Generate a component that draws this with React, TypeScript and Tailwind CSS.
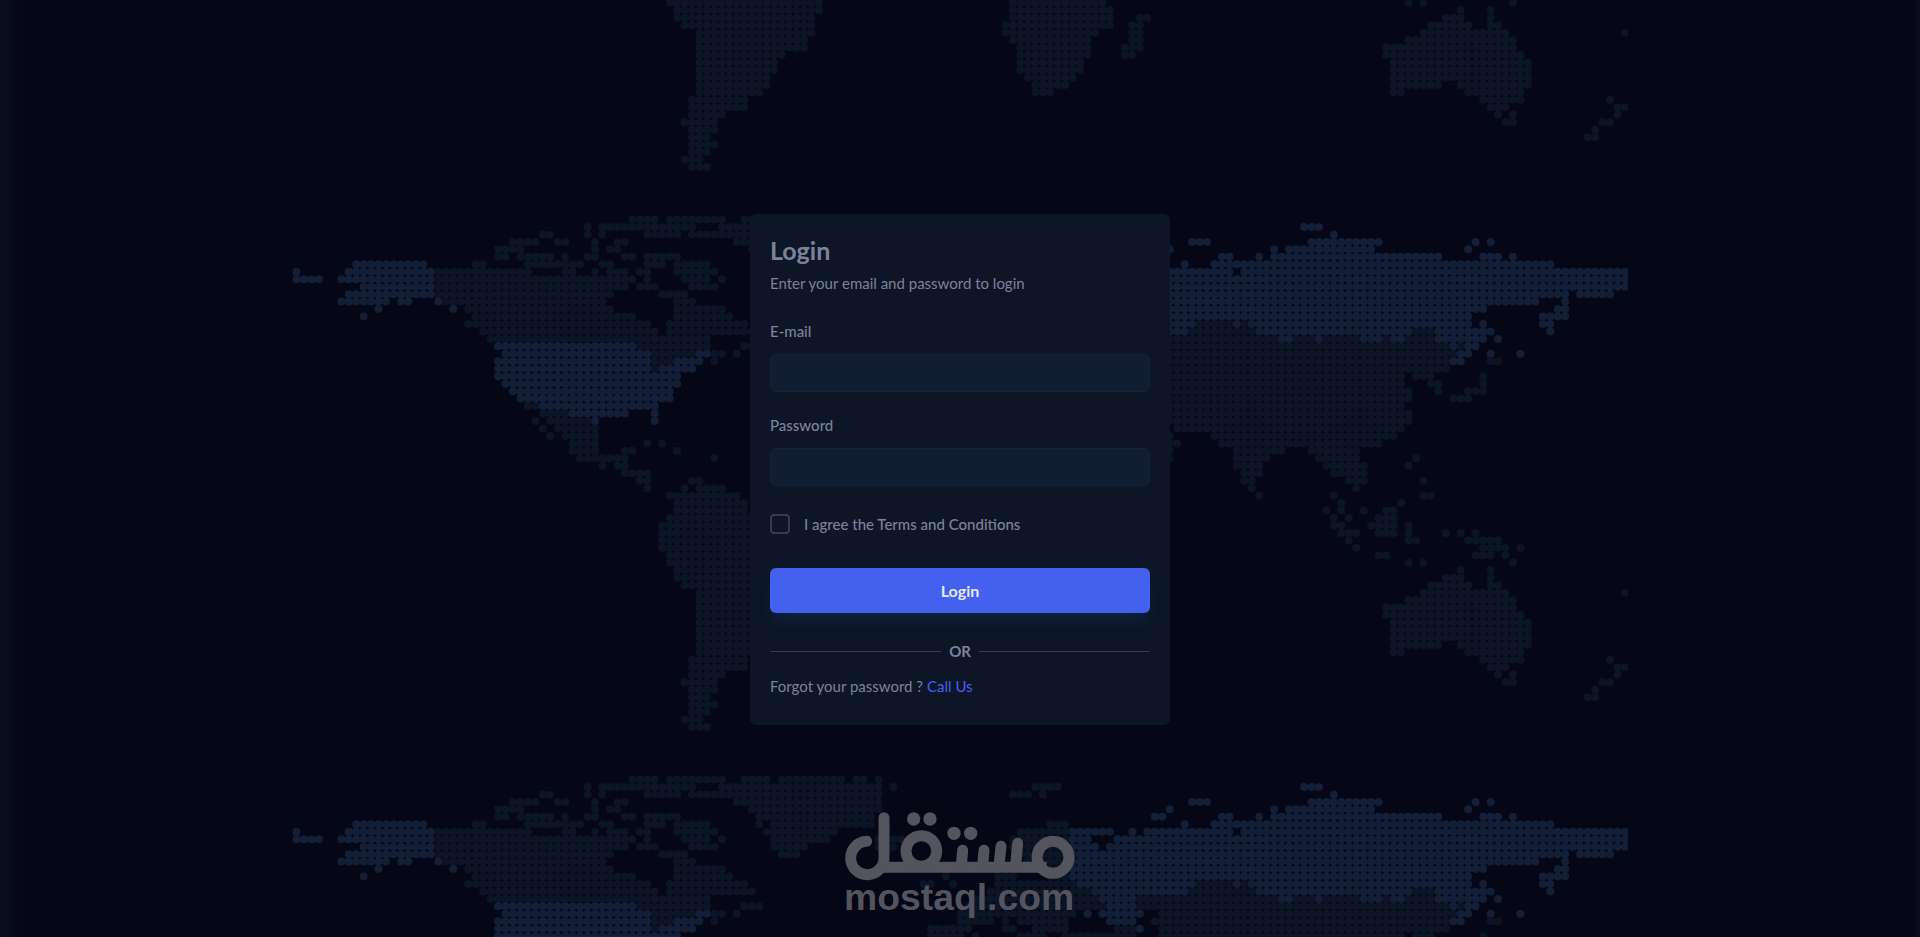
const PITCH = 7.463;

// One string per row of the map, each item is a run of columns.
// Items that start with * belong to the highlighted countries.
const rows = [
  '45-48 50-57 60-63 65-73 75-76 78',
  '39 41-53 57-78 80 99-102 *135-137',
  '33-34 39 41 47-51 53-78 96-98 100 *139',
  '29-32 35-36 40 43-44 59-78 *120-122 *136-145 *158 *160',
  '27-30 40 42-43 61-78 *117 *131 *133-144 *157',
  '27-28 30-34 36 39-40 44-45 47-51 62-77 *115-116 *124-125 *129 *131-153 *159-161 *163',
  '*8-17 24-25 31-38 41-42 47-49 51-55 62 64-77 101-103 *119 *123-168',
  '*0 *7-18 19-31 36-37 40 42-44 46-47 51-56 63-72 97-103 *104-109 *112 *114-125 *127-178',
  '*0-3 *6-18 19-45 47 52-55 57 64-71 78-81 96-103 *104-106 *110-178',
  '*9-18 19-44 46-48 53-56 64-68 78-80 96-103 *104-107 *109-178',
  '*7-18 19-42 49-52 65-67 97-103 *104-170 *172-176',
  '*6-12 *14-15 *19 20-41 51-53 98-103 *104-166 *170',
  '*11 *21 23-42 51-57 100-103 *104-159 *169-170',
  '*9 24-45 51-58 87 94-96 101-103 *104-157 *167-170',
  '23-47 50-60 84-85 88 94-104 *105-120 121-125 *126 127 *128-157 *159 *167-168',
  '25-48 50-61 93-106 *107-119 120-128 *129-149 150-152 *153-160 *168',
  '26-55 91-107 *108-112 113-131 *132-133 134-136 *137 138-142 *143-145 146 *147-148 149-152 *153-159 *161',
  '*27-45 46-55 60-62 90-108 *109-112 113-154 *155 156 *157-158',
  '*28-47 48-53 *54-55 56-57 59 89-104 *106 *108-113 116-155 *156-157 *160 *164',
  '*27-47 48-50 *51-54 56 89-93 95 97-103 *109-112 115-154 *155-156 160-161',
  '*27-47 48 *49-53 85-90 95-96 99-103 110-112 *113 116-154',
  '*27-51 85-89 91 97-100 103-112 116-148 150-152 159',
  '*28-51 117-148 152-153 159',
  '*29-50 117-149 153 157-159',
  '*30-50 117-149 155-157',
  '31-32 *33-48 117-148',
  '33-36 *37-44 *48 117-149',
  '32 34-39 *40 *48 117-149',
  '33 35-40 118-148',
  '34 36-40 117 123-147',
  '37-40 47 49 117-118 124-145',
  '37-40 44-45 51 117 126-132 136-142',
  '38-44 56 117 126-130 137-142 150',
  '41 43-44 126-129 138-143 149',
  '44-47 127-129 139-143',
  '46-47 53-54 127-128 141-143 151',
  '47 52 54-57 128 142',
  '50-59 129 139 151-152',
  '51-60 140 148',
  '51-60 138 140 143 146-147',
  '50-61 139 141 145-147',
  '49-61 139-140 144-147 149',
  '49-61 140-142 145-147 149 154 156 158',
  '49-61 141 149-150 157-161',
  '49-61 142 159-162 164',
  '50-70 96-108 145-146 158-160 162',
  '50-70 96-108 149 151 163',
  '51-70 96-109 156 160',
  '51-69 96-109 113-114 154-156 160',
  '52-69 95-109 112-113 152-157 160-161',
  '54-69 95-107 112-113 151-162 178',
  '54-68 96-106 112-113 149-163',
  '54-68 97-106 111-113 146-163',
  '54-65 97-106 111-112 146-164',
  '54-64 97-105 147-165',
  '54-64 97-105 147-165',
  '54-63 98-104 147-165',
  '54-63 99-103 147-153 156-165',
  '54-62 99-101 147-148 157-164',
  '53-60 159-164 176',
  '53-60 160-162 177-178',
  '53-57 161 163 177',
  '52-56 162-163 175-176',
  '53-56 174',
  '53-55 173-174',
  '53-56',
  '53-55',
  '52-54',
  '53-55',
];

const buildPath = (highlighted: boolean) =>
  rows
    .flatMap((row, r) =>
      row
        .split(' ')
        .filter((run) => run.startsWith('*') === highlighted)
        .map((run) => {
          const [start, end = start] = run.replace('*', '').split('-').map(Number);
          const x = 4.5 + start * PITCH;
          const y = 30.5 + r * PITCH;
          return `M${x.toFixed(2)} ${y.toFixed(2)}h${((end - start) * PITCH + 0.2).toFixed(2)}`;
        })
    )
    .join('');

const landPath = buildPath(false);
const highlightPath = buildPath(true);

const WorldMap = () => {
  return (
    <svg
      className="flex-none w-[1336px] h-[560px]"
      viewBox="0 0 1336 560"
      fill="none"
      strokeWidth="8"
      strokeLinecap="round"
      strokeDasharray={`0 ${PITCH}`}
      aria-hidden="true"
    >
      <path d={landPath} stroke="#0b1525" />
      <path d={highlightPath} stroke="#121f36" />
    </svg>
  );
};

const Watermark = () => {
  return (
    <svg
      className="w-[234px] h-[110px]"
      viewBox="69 63 702 330"
      role="img"
      aria-label="mostaql.com"
    >
      <g fill="none" stroke="#54545f" strokeWidth="33" strokeLinecap="round">
        <path d="M140 154A50 50 0 1 0 192 202V83" />
        <path d="M185 232H680" strokeLinecap="butt" />
        <circle cx="304" cy="183" r="46" />
        <path d="M428 181L424 226M492 181L488 226M543 169L537 226M593 160L587 226" />
        <circle cx="699" cy="202" r="48" />
      </g>
      <g fill="#54545f">
        <path d="M250 218L262 196L290 218ZM358 218L346 196L318 218Z" />
        <circle cx="281" cy="87" r="20" />
        <circle cx="330" cy="87" r="20" />
        <circle cx="402" cy="130" r="20" />
        <circle cx="452" cy="130" r="20" />
        <text
          x="72"
          y="359"
          fontSize="112"
          className="font-bold font-['Liberation_Sans',sans-serif]"
        >
          mostaql.com
        </text>
      </g>
    </svg>
  );
};

const App = () => {
  return (
    <div className="relative min-h-screen overflow-hidden bg-[#050616] font-['Lato',sans-serif] text-[15px] leading-5 text-[#7d829b]">
      <div className="absolute inset-0 flex flex-col items-center justify-center">
        <WorldMap />
        <WorldMap />
        <WorldMap />
      </div>
      <div className="absolute inset-y-0 left-0 w-6 bg-linear-to-r from-[#0a0f20] to-transparent"></div>
      <div className="absolute inset-y-0 right-0 w-2 bg-linear-to-l from-[#0a0f20] to-transparent"></div>

      <main className="relative min-h-screen flex items-center justify-center pt-0.5">
        <div className="w-full max-w-[420px] rounded-md bg-[#0c1626] px-5 pt-5 pb-[29px]">
          <h1 className="text-[25px] leading-8 font-bold">Login</h1>
          <p className="mt-[7px]">Enter your email and password to login</p>
          <form className="mt-7">
            <label htmlFor="email" className="block font-medium">
              E-mail
            </label>
            <input
              id="email"
              type="email"
              className="mt-[13px] block w-full h-[38px] rounded-md border border-[#14233a] bg-[#111e31] px-4 outline-none"
            />
            <label htmlFor="password" className="mt-[23px] block font-medium">
              Password
            </label>
            <input
              id="password"
              type="password"
              className="mt-[13px] block w-full h-[38px] rounded-md border border-[#14233a] bg-[#111e31] px-4 outline-none"
            />
            <div className="mt-7 flex items-center gap-3.5">
              <input
                id="terms"
                type="checkbox"
                className="appearance-none size-5 rounded-sm border-2 border-[#343b4e] checked:bg-[#4361ee]"
              />
              <label htmlFor="terms" className="font-medium">
                I agree the Terms and Conditions
              </label>
            </div>
            <button
              type="submit"
              className="mt-[34px] w-full h-[45px] rounded-md bg-[#4361ee] text-base leading-5 font-bold text-[#e4e8fc] shadow-[0_10px_16px_-4px_rgba(67,97,238,0.14)]"
            >
              Login
            </button>
          </form>
          <div className="mt-7 flex items-center gap-2">
            <div className="h-px flex-1 bg-[#343b4e]"></div>
            <span className="font-bold">OR</span>
            <div className="h-px flex-1 bg-[#343b4e]"></div>
          </div>
          <p className="mt-[15px]">
            Forgot your password ?
            <a href="#" className="ml-1 text-[#4361ee]">
              Call Us
            </a>
          </p>
        </div>
      </main>

      <div className="absolute inset-x-0 bottom-4 flex justify-center pointer-events-none">
        <Watermark />
      </div>
    </div>
  );
};

export default App;
